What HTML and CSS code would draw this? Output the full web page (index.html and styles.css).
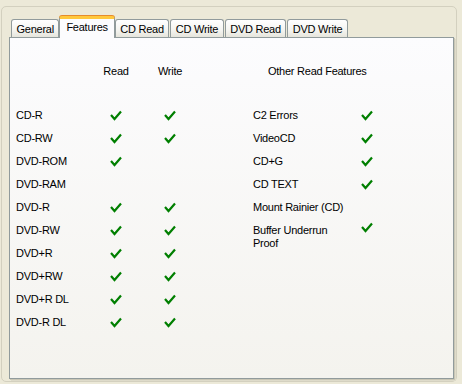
FILE: index.html
```html
<!DOCTYPE html>
<html lang="en">
<head>
  <meta charset="UTF-8" />
  <title>Drive Properties - Features</title>
  <link rel="stylesheet" href="styles.css">
</head>
<body>

  <div class="frame">
    <div class="tabs">
      <div class="tab">General</div>
      <div class="tab active">Features</div>
      <div class="tab">CD Read</div>
      <div class="tab">CD Write</div>
      <div class="tab">DVD Read</div>
      <div class="tab">DVD Write</div>
    </div>

    <div class="panel">
      <div class="discs">
        <div class="head"></div>
        <div class="head col">Read</div>
        <div class="head col">Write</div>

        <div class="label">CD-R</div><div class="yes"><svg class="check" viewBox="0 0 12 11"><polyline points="1,5 4.5,9 11,1.5"/></svg></div><div class="yes"><svg class="check" viewBox="0 0 12 11"><polyline points="1,5 4.5,9 11,1.5"/></svg></div>
        <div class="label">CD-RW</div><div class="yes"><svg class="check" viewBox="0 0 12 11"><polyline points="1,5 4.5,9 11,1.5"/></svg></div><div class="yes"><svg class="check" viewBox="0 0 12 11"><polyline points="1,5 4.5,9 11,1.5"/></svg></div>
        <div class="label">DVD-ROM</div><div class="yes"><svg class="check" viewBox="0 0 12 11"><polyline points="1,5 4.5,9 11,1.5"/></svg></div><div class="yes"></div>
        <div class="label">DVD-RAM</div><div class="yes"></div><div class="yes"></div>
        <div class="label">DVD-R</div><div class="yes"><svg class="check" viewBox="0 0 12 11"><polyline points="1,5 4.5,9 11,1.5"/></svg></div><div class="yes"><svg class="check" viewBox="0 0 12 11"><polyline points="1,5 4.5,9 11,1.5"/></svg></div>
        <div class="label">DVD-RW</div><div class="yes"><svg class="check" viewBox="0 0 12 11"><polyline points="1,5 4.5,9 11,1.5"/></svg></div><div class="yes"><svg class="check" viewBox="0 0 12 11"><polyline points="1,5 4.5,9 11,1.5"/></svg></div>
        <div class="label">DVD+R</div><div class="yes"><svg class="check" viewBox="0 0 12 11"><polyline points="1,5 4.5,9 11,1.5"/></svg></div><div class="yes"><svg class="check" viewBox="0 0 12 11"><polyline points="1,5 4.5,9 11,1.5"/></svg></div>
        <div class="label">DVD+RW</div><div class="yes"><svg class="check" viewBox="0 0 12 11"><polyline points="1,5 4.5,9 11,1.5"/></svg></div><div class="yes"><svg class="check" viewBox="0 0 12 11"><polyline points="1,5 4.5,9 11,1.5"/></svg></div>
        <div class="label">DVD+R DL</div><div class="yes"><svg class="check" viewBox="0 0 12 11"><polyline points="1,5 4.5,9 11,1.5"/></svg></div><div class="yes"><svg class="check" viewBox="0 0 12 11"><polyline points="1,5 4.5,9 11,1.5"/></svg></div>
        <div class="label">DVD-R DL</div><div class="yes"><svg class="check" viewBox="0 0 12 11"><polyline points="1,5 4.5,9 11,1.5"/></svg></div><div class="yes"><svg class="check" viewBox="0 0 12 11"><polyline points="1,5 4.5,9 11,1.5"/></svg></div>
      </div>

      <div class="extras">
        <div class="head other">Other Read Features</div>

        <div class="label">C2 Errors</div><div class="yes"><svg class="check" viewBox="0 0 12 11"><polyline points="1,5 4.5,9 11,1.5"/></svg></div>
        <div class="label">VideoCD</div><div class="yes"><svg class="check" viewBox="0 0 12 11"><polyline points="1,5 4.5,9 11,1.5"/></svg></div>
        <div class="label">CD+G</div><div class="yes"><svg class="check" viewBox="0 0 12 11"><polyline points="1,5 4.5,9 11,1.5"/></svg></div>
        <div class="label">CD TEXT</div><div class="yes"><svg class="check" viewBox="0 0 12 11"><polyline points="1,5 4.5,9 11,1.5"/></svg></div>
        <div class="label">Mount Rainier (CD)</div><div class="yes"></div>
        <div class="label wrap">Buffer Underrun<br>Proof</div><div class="yes top"><svg class="check" viewBox="0 0 12 11"><polyline points="1,5 4.5,9 11,1.5"/></svg></div>
      </div>
    </div>
  </div>

</body>
</html>
```

FILE: styles.css
```css
:root {
  --dialog-bg: #ece9d8;
  --tab-border: #919b9c;
  --check-green: #007f00;
}

* {
  margin: 0;
  padding: 0;
  box-sizing: border-box;
}

body {
  background: var(--dialog-bg);
  font-family: 'Liberation Sans', Arial, sans-serif;
  font-size: 11px;
  letter-spacing: -0.25px;
  color: #000;
  width: 462px;
  height: 384px;
  overflow: hidden;
}

.frame {
  margin: 6px 0 0 1px;
  width: 456px;
  height: 376px;
  border: 1px solid #d3d0bf;
  border-radius: 5px;
  padding: 9px 0 0 7px;
}

/* tab strip */
.tabs {
  display: flex;
  align-items: flex-end;
  margin-left: 2px;
  height: 21px;
}

.tab {
  height: 18px;
  line-height: 18px;
  padding: 0 4.5px;
  margin-right: 1px;
  border: 1px solid var(--tab-border);
  border-bottom: none;
  border-radius: 3px 3px 0 0;
  background: linear-gradient(#ffffff, #f4f4f0 60%, #e6e5dc);
  white-space: nowrap;
}

.tab.active {
  position: relative;
  z-index: 1;
  height: 22px;
  line-height: 17px;
  padding: 0 6px;
  margin: 0 0 -1px -1px;
  border-top: 3px solid #ffc83c;
  box-shadow: 0 -1px 0 #e68b2c;
  background: #fcfcfe;
}

/* page */
.panel {
  display: flex;
  width: 445px;
  height: 342px;
  padding: 22px 0 0 6px;
  border: 1px solid var(--tab-border);
  background: linear-gradient(#fcfcfe, #f4f3ee);
  box-shadow: 1px 1px 0 #c9c6b5, 2px 2px 0 #dedbca;
}

.discs {
  display: grid;
  grid-template-columns: 60px 28px 28px;
  grid-template-rows: 44px;
  grid-auto-rows: 23px;
  column-gap: 26px;
  align-content: start;
}

.extras {
  display: grid;
  grid-template-columns: 100px 28px;
  grid-template-rows: 44px;
  grid-auto-rows: 23px;
  margin-left: 69px;
  align-content: start;
}

.head {
  line-height: 23px;
  white-space: nowrap;
}

.head.col {
  text-align: center;
}

.head.other {
  grid-column: span 2;
  padding-left: 15px;
}

.label {
  line-height: 23px;
  white-space: nowrap;
}

.label.wrap {
  line-height: 13px;
  padding-top: 5px;
}

.yes {
  display: flex;
  align-items: center;
  justify-content: center;
}

.yes.top {
  align-self: start;
  height: 16px;
}

.check {
  width: 12px;
  height: 11px;
  fill: none;
  stroke: var(--check-green);
  stroke-width: 2.2;
}
```
